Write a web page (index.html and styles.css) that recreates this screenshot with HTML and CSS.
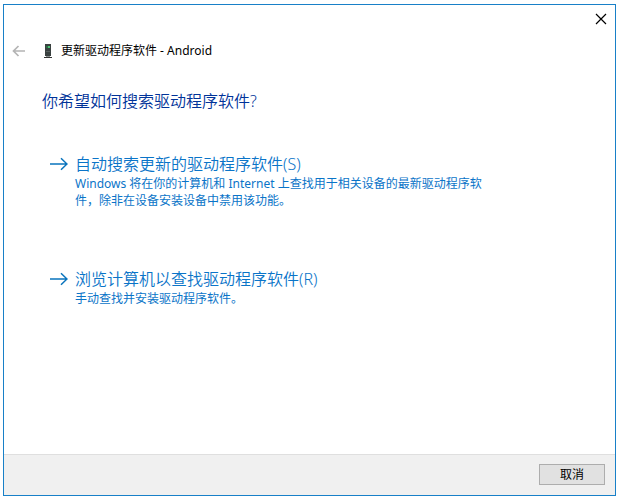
FILE: index.html
```
<!DOCTYPE html>
<html lang="zh-CN">
<head>
  <meta charset="UTF-8" />
  <meta name="viewport" content="width=device-width, initial-scale=1.0"/>
  <title>更新驱动程序软件 - Android</title>
  <link rel="stylesheet" href="styles.css">
</head>
<body>

  <div class="dialog">
    <div class="caption">
      <button class="icon-btn close" type="button" aria-label="关闭">
        <svg width="12" height="12" viewBox="0 0 12 12"><path d="M1 1L11 11M11 1L1 11" stroke="#000" stroke-width="1.2" fill="none"/></svg>
      </button>
    </div>

    <header class="title-bar">
      <button class="icon-btn back" type="button" aria-label="返回" disabled>
        <svg width="14" height="12" viewBox="0 0 14 12"><path d="M13 6H2M6.5 1L1.5 6L6.5 11" stroke="#b4b4b4" stroke-width="1.7" fill="none"/></svg>
      </button>
      <svg class="device" width="8" height="16" viewBox="0 0 8 16">
        <path d="M1 1H7V13H1Z" fill="#3a4140"/>
        <path d="M2 3H6V5H2Z" fill="#2e6b45"/>
        <path d="M4 3H6V5H4Z" fill="#4cc274"/>
        <path d="M2 8H6V9H2Z" fill="#59605f"/>
        <path d="M2 13H6V14H2Z" fill="#8a8f8e"/>
        <path d="M0 14H8V15H0Z" fill="#333"/>
      </svg>
      <span class="title">更新驱动程序软件 - Android</span>
    </header>

    <main class="content">
      <h1>你希望如何搜索驱动程序软件?</h1>

      <div class="options">
        <button class="option" type="button">
          <svg class="arrow" width="18" height="14" viewBox="0 0 18 14"><path d="M0 7H16.5M11 1.2L17 7L11 12.8" stroke="#0a74bd" stroke-width="1.5" fill="none"/></svg>
          <span class="option-text">
            <span class="option-title">自动搜索更新的驱动程序软件(S)</span>
            <span class="option-desc">Windows 将在你的计算机和 Internet 上查找用于相关设备的最新驱动程序软件，除非在设备安装设备中禁用该功能。</span>
          </span>
        </button>

        <button class="option" type="button">
          <svg class="arrow" width="18" height="14" viewBox="0 0 18 14"><path d="M0 7H16.5M11 1.2L17 7L11 12.8" stroke="#0a74bd" stroke-width="1.5" fill="none"/></svg>
          <span class="option-text">
            <span class="option-title">浏览计算机以查找驱动程序软件(R)</span>
            <span class="option-desc">手动查找并安装驱动程序软件。</span>
          </span>
        </button>
      </div>
    </main>

    <footer class="footer">
      <button class="cancel" type="button">取消</button>
    </footer>
  </div>

</body>
</html>
```

FILE: styles.css
```
* {
  box-sizing: border-box;
}

body {
  margin: 0;
  padding: 4px 1px 2px 3px;
  min-height: 100vh;
  display: flex;
  background: #ffffff;
  font-family: "Noto Sans", "Noto Sans CJK SC", sans-serif;
  font-size: 12px;
  color: #000;
}

button {
  font: inherit;
  color: inherit;
}

.dialog {
  flex: 1;
  display: flex;
  flex-direction: column;
  border: 1px solid #1880c8;
}

.caption {
  display: flex;
  justify-content: flex-end;
  padding: 8px 7px 0;
}

.icon-btn {
  display: flex;
  padding: 0;
  border: 0;
  background: none;
}

.close {
  padding: 0 1px;
}

.title-bar {
  display: flex;
  align-items: center;
  padding: 14px 8px 0;
  line-height: 24px;
}

.device {
  margin: 0 9px 0 18px;
}

.content {
  flex: 1;
  padding: 26px 38px;
}

h1 {
  margin: 0;
  font-size: 16px;
  font-weight: 350;
  line-height: 24px;
  color: #003399;
}

.options {
  display: flex;
  flex-direction: column;
  gap: 59px;
  padding: 40px 8px 0;
}

.option {
  display: flex;
  align-items: flex-start;
  gap: 7px;
  padding: 0;
  border: 0;
  background: none;
  text-align: left;
  color: #0a74c8;
}

.arrow {
  flex: none;
  margin-top: 4px;
}

.option-text {
  max-width: 416px;
}

.option-title,
.option-desc {
  display: block;
}

.option-title {
  font-size: 16px;
  font-weight: 350;
  line-height: 22px;
}

.option-desc {
  line-height: 17px;
}

.footer {
  display: flex;
  justify-content: flex-end;
  padding: 9px 10px 10px;
  border-top: 1px solid #dfdfdf;
  background: #f0f0f0;
}

.cancel {
  width: 66px;
  height: 21px;
  padding: 0;
  border: 1px solid #adadad;
  background: #e1e1e1;
  line-height: 19px;
}
```
